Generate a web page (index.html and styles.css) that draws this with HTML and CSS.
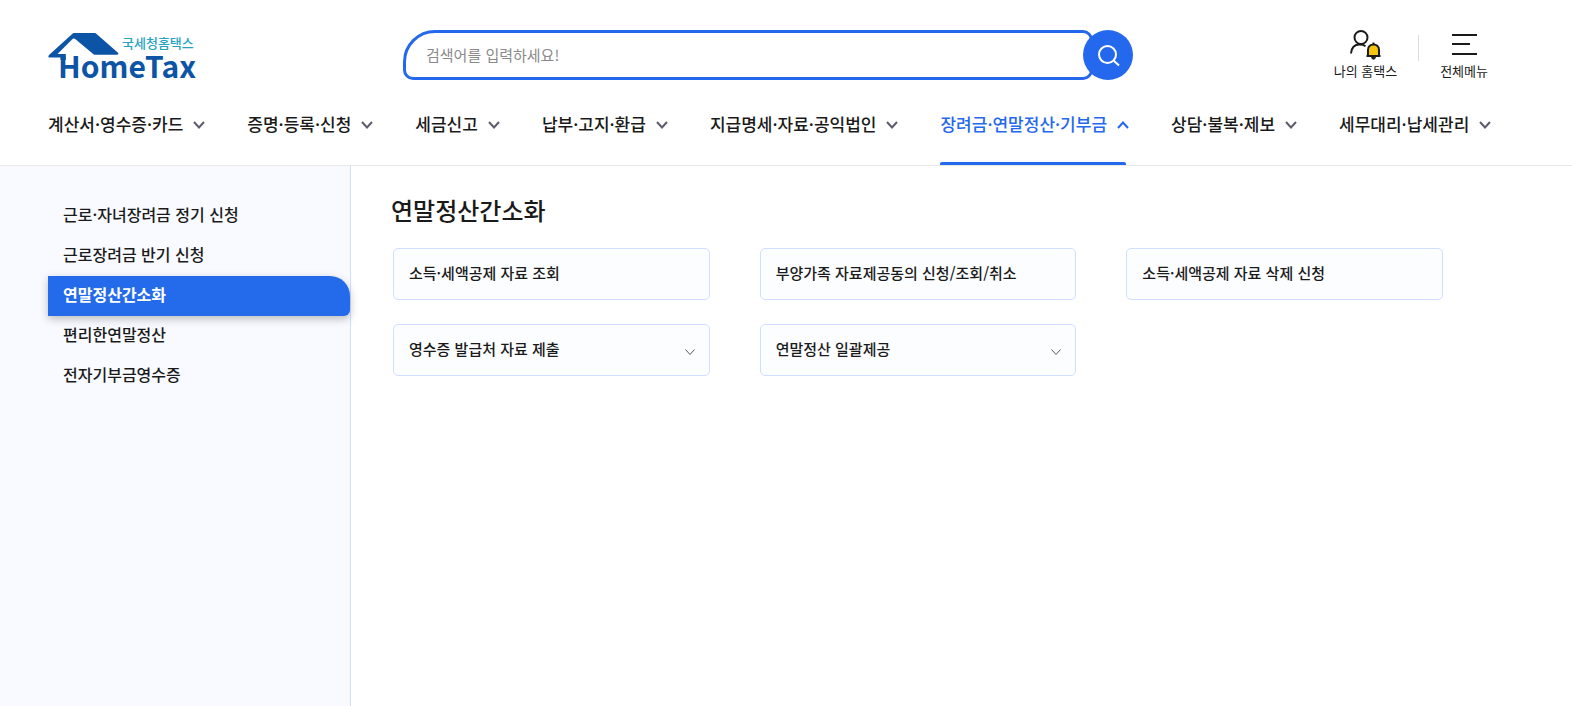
FILE: index.html
```html
<!DOCTYPE html>
<html lang="ko">
	<head>
		<meta charset="UTF-8" />
		<meta name="viewport" content="width=device-width, initial-scale=1" />
		<title>국세청 홈택스</title>
		<link rel="stylesheet" href="styles.css">
	</head>
	<body>
		<header class="header">
			<div class="header-top">
				<a href="#" class="logo">
					<svg width="150" height="50" viewBox="0 0 150 50" role="img" aria-label="국세청홈택스 HomeTax">
						<path class="logo-roof" d="M1 25.5Q-.5 24.5 1 23L25 1.2Q25.4 1 26 1H47Q47.600 1 48 1.400L70 20.800Q71 22.700 69 22.700H46.500Q46 22.700 45.500 22.300L27.500 7.200Q25.800 5.800 24 7.400L9.500 22H17.800V28H12.500V25.500Z" />
						<text class="logo-ko" x="74" y="16">국세청홈택스</text>
						<text class="logo-en" x="10" y="46">HomeTax</text>
					</svg>
				</a>
				<form class="search" onsubmit="return false">
					<input type="text" class="search-input" placeholder="검색어를 입력하세요!" aria-label="검색어" />
					<button class="search-btn" aria-label="검색">
						<svg width="24" height="24" viewBox="0 0 24 24">
							<circle cx="11.500" cy="11.500" r="8.500" />
							<path d="M17.500 17.500L23 22.500" />
						</svg>
					</button>
				</form>
				<div class="util">
					<a href="#" class="util-item">
						<svg width="32" height="31" viewBox="0 -1 32 31">
							<circle cx="12" cy="6.500" r="6.500" />
							<path d="M2 22.500C2.500 16.500 6 13.500 10.500 13.500C13 13.500 15 14 16.500 15.200" />
							<path class="bell" d="M19 25V19C19 11.500 30 11.500 30 19V25Z" />
							<path d="M17.500 25H31.500M24.500 11.500V13" />
							<path class="clapper" d="M22 26H27Q26.500 28.800 24.500 28.800Q22.500 28.800 22 26Z" />
						</svg>
						<span>나의 홈택스</span>
					</a>
					<span class="util-line"></span>
					<a href="#" class="util-item">
						<svg width="32" height="31" viewBox="0 -1 32 31">
							<path d="M4 4H29M4 13H22M4 23H29" />
						</svg>
						<span>전체메뉴</span>
					</a>
				</div>
			</div>
			<nav class="gnb">
				<button class="gnb-item">계산서·영수증·카드<svg class="arrow" viewBox="0 0 12 8"><path d="M1 1L6 6.500L11 1" /></svg></button>
				<button class="gnb-item">증명·등록·신청<svg class="arrow" viewBox="0 0 12 8"><path d="M1 1L6 6.500L11 1" /></svg></button>
				<button class="gnb-item">세금신고<svg class="arrow" viewBox="0 0 12 8"><path d="M1 1L6 6.500L11 1" /></svg></button>
				<button class="gnb-item">납부·고지·환급<svg class="arrow" viewBox="0 0 12 8"><path d="M1 1L6 6.500L11 1" /></svg></button>
				<button class="gnb-item">지급명세·자료·공익법인<svg class="arrow" viewBox="0 0 12 8"><path d="M1 1L6 6.500L11 1" /></svg></button>
				<button class="gnb-item active" aria-expanded="true">장려금·연말정산·기부금<svg class="arrow" viewBox="0 0 12 8"><path d="M1 7L6 1.500L11 7" /></svg></button>
				<button class="gnb-item">상담·불복·제보<svg class="arrow" viewBox="0 0 12 8"><path d="M1 1L6 6.500L11 1" /></svg></button>
				<button class="gnb-item">세무대리·납세관리<svg class="arrow" viewBox="0 0 12 8"><path d="M1 1L6 6.500L11 1" /></svg></button>
			</nav>
		</header>

		<div class="container">
			<aside class="side">
				<a href="#" class="side-item">근로·자녀장려금 정기 신청</a>
				<a href="#" class="side-item">근로장려금 반기 신청</a>
				<a href="#" class="side-item active">연말정산간소화</a>
				<a href="#" class="side-item">편리한연말정산</a>
				<a href="#" class="side-item">전자기부금영수증</a>
			</aside>
			<main class="content">
				<h2>연말정산간소화</h2>
				<div class="menu-grid">
					<a href="#" class="menu-box">소득·세액공제 자료 조회</a>
					<a href="#" class="menu-box">부양가족 자료제공동의 신청/조회/취소</a>
					<a href="#" class="menu-box">소득·세액공제 자료 삭제 신청</a>
					<button class="menu-box">영수증 발급처 자료 제출<svg class="box-arrow" viewBox="0 0 10 7"><path d="M.5 .5L5 5.500L9.500 .5" /></svg></button>
					<button class="menu-box">연말정산 일괄제공<svg class="box-arrow" viewBox="0 0 10 7"><path d="M.5 .5L5 5.500L9.500 .5" /></svg></button>
				</div>
			</main>
		</div>
	</body>
</html>
```

FILE: styles.css
```css
* {
	box-sizing: border-box;
}
body {
	margin: 0;
	min-height: 100vh;
	display: flex;
	flex-direction: column;
	font-family: "Noto Sans CJK KR", "Noto Sans", sans-serif;
	color: #1a1a1a;
	background: #fff;
}
a {
	color: inherit;
	text-decoration: none;
}
button {
	font-family: inherit;
	color: inherit;
	border: 0;
	padding: 0;
	background: none;
	cursor: pointer;
}
svg {
	display: block;
	fill: none;
	stroke: currentColor;
}

/* header */
.header {
	border-bottom: 1px solid #e8e8e8;
}
.header-top {
	display: flex;
	align-items: flex-start;
	padding: 30px 84px 0 48px;
}
.logo {
	flex: 0 0 355px;
	padding-top: 2px;
}
.logo svg {
	stroke: none;
	overflow: visible;
}
.logo-roof,
.logo-en {
	fill: #0c54a5;
}
.logo-ko {
	fill: #25a3bf;
	font-size: 13px;
	font-weight: 500;
}
.logo-en {
	font-size: 30px;
	font-weight: 700;
}
.search {
	flex: 0 1 730px;
	display: flex;
}
.search-input {
	flex: 1;
	min-width: 0;
	height: 50px;
	padding: 0 20px 2px;
	border: 3px solid #2468ed;
	border-radius: 32px 10px 10px 10px;
	font-family: inherit;
	font-size: 15px;
	outline: 0;
}
.search-input::placeholder {
	color: #8a8a8a;
}
.search-btn {
	display: flex;
	align-items: center;
	justify-content: center;
	width: 50px;
	height: 50px;
	margin-left: -10px;
	border-radius: 50%;
	background: #2468ed;
	color: #fff;
	z-index: 1;
}
.search-btn svg {
	stroke-width: 2;
}
.util {
	display: flex;
	margin-left: auto;
}
.util-item {
	display: flex;
	flex-direction: column;
	align-items: center;
	font-size: 13px;
	line-height: 20px;
	white-space: nowrap;
}
.util-item svg {
	stroke-width: 2;
}
.util-line {
	width: 1px;
	height: 26px;
	margin: 5px 21px 0;
	background: #ddd;
}
.util-item .bell {
	fill: #f5c60c;
}
.util-item .clapper {
	fill: #222;
	stroke: none;
}
.gnb {
	display: flex;
	gap: 42px;
	padding: 0 48px;
}
.gnb-item {
	position: relative;
	display: flex;
	align-items: center;
	gap: 10px;
	height: 83px;
	font-size: 17px;
	font-weight: 500;
	white-space: nowrap;
}
.arrow {
	width: 12px;
	height: 8px;
	margin-top: 2px;
	color: #5c5c6b;
	stroke-width: 2;
}
.gnb-item.active,
.gnb-item.active .arrow {
	color: #2468ed;
}
.gnb-item.active::after {
	content: "";
	position: absolute;
	left: 0;
	right: 3px;
	bottom: 0;
	height: 3px;
	border-radius: 2px 2px 0 0;
	background: #2468ed;
}

/* body */
.container {
	flex: 1;
	display: flex;
}
.side {
	flex: 0 0 351px;
	padding: 30px 0 30px 48px;
	border-right: 1px solid #d0deff;
	background: #f9faff;
}
.side-item {
	display: block;
	padding: 0 0 4px 15px;
	font-size: 16px;
	font-weight: 500;
	line-height: 36px;
}
.side-item.active {
	border-radius: 0 20px 6px 0;
	background: #246beb;
	box-shadow: 0 3px 8px rgba(0, 0, 0, 0.25);
	color: #fff;
	font-weight: 700;
}
.content {
	flex: 1;
	padding: 26px 129px 40px 40px;
}
h2 {
	margin: 0 0 20px;
	font-size: 24px;
	font-weight: 500;
	line-height: 36px;
}
.menu-grid {
	display: grid;
	grid-template-columns: repeat(3, 1fr);
	gap: 24px 50px;
	padding-left: 2px;
}
.menu-box {
	display: flex;
	align-items: center;
	justify-content: space-between;
	height: 52px;
	padding: 0 14px 4px 15px;
	border: 1px solid #d0deff;
	border-radius: 5px;
	background: #fcfdff;
	font-size: 15px;
	font-weight: 500;
}
.box-arrow {
	width: 10px;
	height: 7px;
	margin-top: 8px;
	color: #555;
}
```
